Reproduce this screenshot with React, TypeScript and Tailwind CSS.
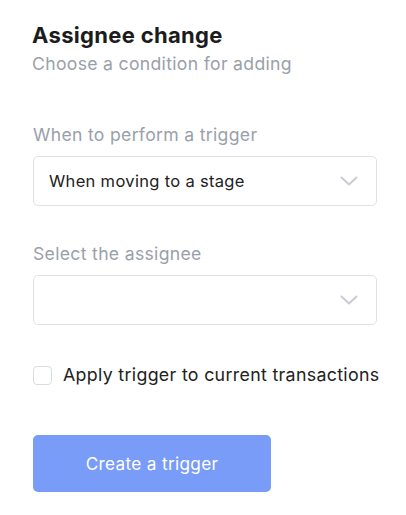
import React from "react";

function Chevron() {
  return (
    <svg width="18" height="10" viewBox="0 0 18 10" fill="none">
      <path d="M1.5 1.5L9 8.5L16.5 1.5" stroke="#c8ccd4" strokeWidth="2" strokeLinecap="round" strokeLinejoin="round" />
    </svg>
  );
}

export default function App() {
  return (
    <div className="w-[406px] h-[515px] bg-white px-[33px] pt-[21px] tracking-[0.02em]" style={{ fontFamily: "Inter, 'Noto Sans', sans-serif" }}>
      <h1 className="text-[22px] leading-[28px] font-bold text-[#1c1c1c] -ml-px">Assignee change</h1>
      <p className="text-[17.6px] leading-[22px] text-[#9aa0aa] -ml-px mt-[4px]">Choose a condition for adding</p>

      <div className="mt-[48px]">
        <div className="text-[17.6px] leading-[24px] text-[#9aa0aa]">When to perform a trigger</div>
        <div className="mt-[9px] h-[50px] w-[344px] border border-[#dfe2e7] rounded-[5px] flex items-center justify-between pl-[15px] pr-[18px]">
          <span className="text-[16.5px] text-[#222]">When moving to a stage</span>
          <Chevron />
        </div>
      </div>

      <div className="mt-[36px]">
        <div className="text-[17.6px] leading-[24px] text-[#9aa0aa]">Select the assignee</div>
        <div className="mt-[9px] h-[50px] w-[344px] border border-[#dfe2e7] rounded-[5px] flex items-center justify-end pl-[15px] pr-[18px]">
          <Chevron />
        </div>
      </div>

      <label className="mt-[38px] flex items-center gap-[11px]">
        <span className="w-[19px] h-[19px] border border-[#d9dce2] rounded-[4px] bg-white shrink-0" />
        <span className="text-[17.8px] leading-[24px] text-[#222] whitespace-nowrap">Apply trigger to current transactions</span>
      </label>

      <button className="mt-[48px] w-[238px] h-[57px] rounded-[5px] bg-[#799cf8] text-white text-[17.2px] flex items-center justify-center">
        Create a trigger
      </button>
    </div>
  );
}
